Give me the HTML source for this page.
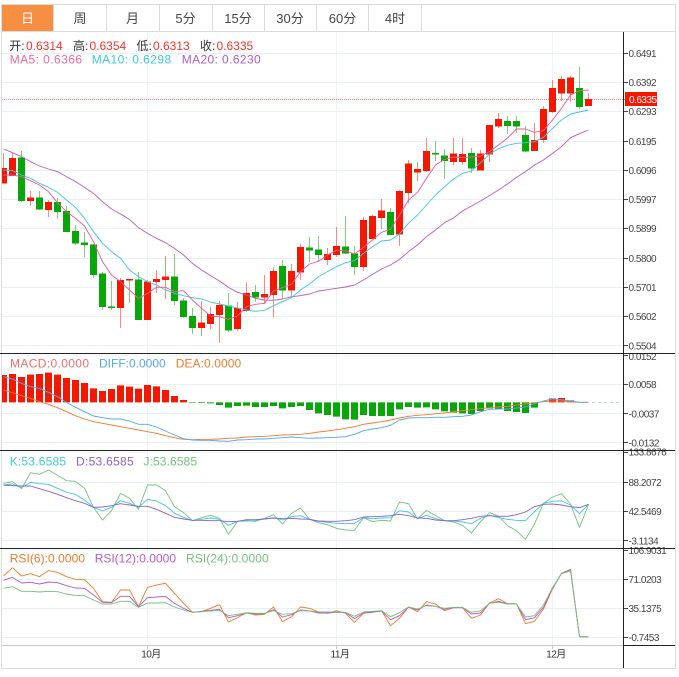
<!DOCTYPE html>
<html><head><meta charset="utf-8"><style>
html,body{margin:0;padding:0;background:#fff;width:679px;height:677px;overflow:hidden}
svg{display:block;font-family:"Liberation Sans","Noto Sans CJK SC",sans-serif}
.n{vector-effect:non-scaling-stroke;fill:none}
.ax text{font-size:10px;letter-spacing:-.5px;fill:#444}
.tb text{font-size:13px;fill:#444;text-anchor:middle}
</style></head><body>
<svg width="679" height="677" viewBox="0 0 679 677" xmlns="http://www.w3.org/2000/svg">
<defs><clipPath id="c"><rect x="2" y="32" width="621" height="613"/></clipPath></defs>
<!-- grid -->
<path stroke="#e8f0f5" stroke-width="1" fill="none" d="M2 53.5H623M2 82.5H623M2 111.5H623M2 141.5H623M2 170.5H623M2 199.5H623M2 228.5H623M2 258.5H623M2 287.5H623M2 316.5H623M2 345.5H623M2 384.5H623M2 413.5H623M2 442.5H623M2 482.5H623M2 511.5H623M2 540.5H623M2 579.5H623M2 608.5H623M2 637.5H623"/>
<path stroke="#f2f6f9" stroke-width="1" fill="none" d="M2 355.5H623M2 452.5H623M2 550.5H623"/>
<path stroke="#edf3f7" stroke-width="1" fill="none" d="M147.5 32V645M336.5 32V645M552.5 32V645"/>
<path stroke="#f77" stroke-width="1" stroke-dasharray="1 1" fill="none" d="M2 99.5H625"/>
<path stroke="#b5d8ea" stroke-width="1" stroke-dasharray="3 3" fill="none" d="M592 402.5H622"/>
<g clip-path="url(#c)">
<!-- candles -->
<g transform="translate(3.5 0) scale(9 1)">
<path class="n" stroke="#f98a80" stroke-width="1" d="M0 153V168M1 153V158M3 191V206M5 200V217M13 278V328M14 279V303M16 280V282M17 270V293M18 256V299M22 301V336M23 307V329M24 301V343M26 302V331M27 282V312M29 275V304M30 267V317M32 264V297M33 244V280M36 248V265M37 227V257M40 217V271M41 215V217M42 199V229M44 190V246M45 160V203M46 162V181M47 138V172M50 138V165M51 138V165M53 150V170M54 125V162M55 113V128M59 123V151M60 106V143M61 80V113M62 76V101M63 76V102M65 93V106"/>
<path class="n" stroke="#7fcf7f" stroke-width="1" d="M2 151V202M4 191V210M6 198V219M7 206V232M8 225V245M9 232V257M10 244V278M11 272V310M12 281V310M15 272V320M19 254V305M20 298V318M21 308V334M25 293V332M28 285V302M31 260V299M34 237V262M35 236V262M38 216V254M39 246V275M43 208V235M48 141V161M49 149V179M52 148V173M56 116V134M57 116V133M58 126V152M64 67V109"/>
<path class="n" stroke="#f51800" stroke-width="7" d="M0 168V183.5M1 158V176M3 197.5V201M5 202V210M13 280V308M14 279V280.5M16 281.5V320M17 279V282M18 276.5V280M22 322.5V328M23 314V324M24 305V315M26 308V329M27 293V311M29 294V297.5M30 271V295M32 271V290.5M33 247V272.5M36 254V260M37 246V255M40 220V267M41 216V239M42 210.5V218M44 191V234.5M45 163.5V193M46 169V172.5M47 151V171M50 153.5V162M51 154V162M53 153.5V170.5M54 125V154.5M55 119V126.5M59 140V151M60 109V140M61 88V112M62 79V93.5M63 77.5V93.5M65 99V106"/>
<path class="n" stroke="#09a609" stroke-width="7" d="M2 157.5V201M4 197.5V209.5M6 202V212M7 211V232M8 231V243.5M9 242.5V245M10 244.5V275M11 273.5V307M12 306.5V308M15 279.5V320M19 276.5V301M20 300.5V317M21 316V328M25 305.5V330.5M28 292V297.5M31 266V290.5M34 247.5V250.5M35 249.5V255M38 246.5V253.5M39 253.5V267M43 212V235M48 153V154.5M49 155.5V161M52 153V168.5M56 121V126M57 121V126.5M58 135V151.5M64 88V107"/>
</g>
<!-- MA -->
<g transform="translate(3.5 130) scale(9 .33333)" stroke-width=".9" stroke-linejoin="round">
<polyline class="n" stroke="#b35cc8" points="0,57 1,68 2,80 3,95 4,108 5,117 6,125 7,140 8,155 9,172 10,190 11,215 12,237 13,252 14,268 15,293 16,310 17,325 18,338 19,355 20,375 21,400 22,420 23,437 24,453 25,472 26,487 27,495 28,505 29,510 30,511 31,507 32,500 33,497 34,492 35,483 36,479 37,475 38,471 39,465 40,450 41,433 42,417 43,405 44,388 45,365 46,345 47,320 48,300 49,278 50,264 51,243 52,228 53,213 54,197 55,180 56,162 57,142 58,125 59,105 60,90 61,70 62,50 63,23 64,11 65,0"/>
<polyline class="n" stroke="#3cc8de" points="0,120 1,122 2,135 3,145 4,160 5,172 6,187 7,210 8,232 9,265 10,305 11,340 12,365 13,385 14,420 15,440 16,455 17,465 18,480 19,490 20,497 21,503 22,507 23,516 24,522 25,528 26,534 27,540 28,544 29,541 30,527 31,515 32,503 33,480 34,462 35,440 36,425 37,410 38,398 39,392 40,370 41,350 42,333 43,330 44,312 45,280 46,255 47,225 48,195 49,170 50,147 51,130 52,123 53,98 54,73 55,56 56,46 57,40 58,38 59,35 60,22 61,-5 62,-30 63,-48 64,-54 65,-60"/>
<polyline class="n" stroke="#ee5a90" points="0,135 1,135 2,140 3,152 4,165 5,185 6,218 7,245 8,265 9,288 10,335 11,395 12,435 13,455 14,480 15,505 16,490 17,472 18,472 19,485 20,482 21,510 22,535 23,558 24,560 25,568 26,558 27,530 28,523 29,520 30,483 31,473 32,463 33,425 34,402 35,394 36,375 37,361 38,362 39,372 40,352 41,330 42,307 43,298 44,255 45,210 46,187 47,145 48,105 49,88 50,81 51,83 52,81 53,78 54,65 55,45 56,24 57,-3 58,-3 59,7 60,2 61,-30 62,-65 63,-105 64,-118 65,-120"/>
</g>
<!-- MACD -->
<g transform="translate(3.5 345) scale(9 .33333)" stroke-linejoin="round">
<path class="n" stroke="#f51800" stroke-width="7" d="M0 172V90M1 172V87M2 172V96M3 172V89M4 172V87M5 172V83M6 172V89M7 172V99M8 172V105M9 172V114M10 172V130M11 172V138M12 172V132M13 172V121M14 172V125M15 172V131M16 172V120M17 172V124M18 172V135M19 172V153M20 172V165M61 172V160M62 172V159M63 172V166"/>
<path class="n" stroke="#09a609" stroke-width="7" d="M21 172V173.5M22 172V174M23 172V175M24 172V180M25 172V188M26 172V183M27 172V182M28 172V186M29 172V186M30 172V183M31 172V190M32 172V186M33 172V183M34 172V195M35 172V205M36 172V210M37 172V215M38 172V223M39 172V224M40 172V210M41 172V213M42 172V213M43 172V213M44 172V193M45 172V186M46 172V188M47 172V187M48 172V193M49 172V199M50 172V203M51 172V205M52 172V207M53 172V198M54 172V190M55 172V192M56 172V198M57 172V201M58 172V204M59 172V188"/>
<polyline class="n" stroke="#f57a2c" stroke-width=".9" points="0,135 1,143 2,152 3,160 4,170 5,178 6,188 7,200 8,212 9,222 10,230 11,235 12,240 13,245 14,250 15,255 16,260 17,265 18,272 19,278 20,283 21,284 22,283 23,283 24,282 25,280 26,279 27,276 28,275 29,274 30,272 31,270 32,269 33,268 34,265 35,261 36,258 37,254 38,250 39,245 40,238 41,234 42,230 43,225 44,219 45,214 46,211 47,209 48,206 49,204 50,200 51,197 52,194 53,191 54,188 55,186 56,184 57,180 58,177 59,173 60,170 61,168 62,168 63,171 64,172 65,172"/>
<polyline class="n" stroke="#4fa8f0" stroke-width=".9" points="0,95 1,102 2,115 3,125 4,130 5,142 6,155 7,172 8,187 9,200 10,213 11,218 12,222 13,222 14,228 15,238 16,238 17,246 18,258 19,270 20,281 21,285 22,286 23,286 24,288 25,289 26,285 27,284 28,282 29,282 30,280 31,278 32,276 33,278 34,280 35,279 36,278 37,277 38,275 39,268 40,257 41,252 42,248 43,241 44,225 45,219 46,218 47,218 48,217 49,217 50,215 51,214 52,210 53,200 54,193 55,192 56,192 57,189 58,186 59,176 60,168 61,162 62,164 63,168 64,172 65,172"/>
</g>
<!-- KDJ -->
<g transform="translate(3.5 450) scale(9 .33333)" stroke-linejoin="round" stroke-width=".9">
<polyline class="n" stroke="#74c27a" points="0,100 1,95 2,116 3,68 4,73 5,60 6,76 7,92 8,94 9,115 10,172 11,210 12,182 13,130 14,145 15,178 16,105 17,105 18,122 19,170 20,188 21,212 22,203 23,196 24,205 25,253 26,214 27,211 28,214 29,205 30,194 31,222 32,190 33,174 34,208 35,218 36,224 37,235 38,240 39,241 40,203 41,215 42,211 43,213 44,156 45,161 46,207 47,181 48,197 49,212 50,216 51,226 52,249 53,215 54,188 55,198 56,227 57,242 58,268 59,222 60,160 61,141 62,131 63,162 64,232 65,163"/>
<polyline class="n" stroke="#3cc8de" points="0,105 1,102 2,113 3,97 4,101 5,103 6,115 7,127 8,133 9,150 10,172 11,183 12,172 13,152 14,160 15,172 16,148 17,153 18,167 19,190 20,202 21,212 22,208 23,204 24,208 25,226 26,214 27,213 28,212 29,207 30,203 31,210 32,200 33,197 34,208 35,214 36,217 37,220 38,221 39,220 40,203 41,206 42,204 43,203 44,182 45,186 46,206 47,196 48,206 49,212 50,213 51,216 52,221 53,205 54,196 55,203 56,208 57,211 58,212 59,185 60,160 61,154 62,153 63,165 64,191 65,163"/>
<polyline class="n" stroke="#8e5fc9" points="0,106 1,107 2,108 3,108 4,116 5,124 6,133 7,143 8,152 9,160 10,172 11,171 12,167 13,161 14,165 15,169 16,169 17,178 18,190 19,202 20,207 21,211 22,211 23,212 24,212 25,215 26,214 27,209 28,209 29,207 30,204 31,206 32,205 33,207 34,208 35,213 36,214 37,214 38,212 39,209 40,201 41,200 42,199 43,197 44,193 45,197 46,204 47,205 48,210 49,212 50,212 51,209 52,205 53,199 54,197 55,199 56,199 57,194 58,186 59,170 60,163 61,162 62,165 63,170 64,173 65,163"/>
</g>
<!-- RSI -->
<g transform="translate(3.5 545) scale(9 .33333)" stroke-linejoin="round" stroke-width=".9">
<polyline class="n" stroke="#f57a2c" points="0,93 1,68 2,93 3,86 4,95 5,77 6,82 7,95 8,103 9,104 10,130 11,170 12,172 13,135 14,135 15,185 16,127 17,120 18,115 19,145 20,175 21,202 22,200 23,190 24,179 25,231 26,218 27,203 28,210 29,208 30,186 31,230 32,215 33,186 34,190 35,200 36,205 37,197 38,205 39,232 40,205 41,202 42,197 43,242 44,220 45,186 46,200 47,170 48,177 49,197 50,188 51,188 52,220 53,210 54,174 55,161 56,176 57,176 58,236 59,229 60,192 61,132 62,85 63,73 64,275 65,275"/>
<polyline class="n" stroke="#b35cc8" points="0,106 1,97 2,114 3,112 4,117 5,111 6,113 7,122 8,129 9,130 10,150 11,172 12,173 13,154 14,154 15,185 16,158 17,156 18,154 19,175 20,190 21,202 22,199 23,196 24,193 25,218 26,212 27,204 28,207 29,206 30,194 31,216 32,209 33,195 34,198 35,204 36,204 37,202 38,203 39,221 40,204 41,201 42,198 43,224 44,212 45,187 46,195 47,180 48,184 49,193 50,188 51,188 52,207 53,204 54,175 55,169 56,176 57,177 58,224 59,218 60,187 61,130 62,85 63,74 64,275 65,275"/>
<polyline class="n" stroke="#74c27a" points="0,130 1,125 2,139 3,139 4,141 5,139 6,140 7,147 8,151 9,152 10,165 11,177 12,177 13,169 14,169 15,187 16,174 17,174 18,173 19,186 20,195 21,202 22,200 23,198 24,196 25,212 26,208 27,203 28,205 29,205 30,197 31,208 32,206 33,197 34,198 35,201 36,201 37,201 38,202 39,214 40,201 41,199 42,197 43,215 44,203 45,186 46,192 47,182 48,184 49,190 50,187 51,187 52,202 53,197 54,175 55,172 56,177 57,177 58,216 59,212 60,180 61,128 62,86 63,78 64,275 65,275"/>
</g>
</g>
<!-- tabs -->
<rect x="2" y="5" width="51" height="26" fill="#f68f42"/>
<path stroke="#dcdcdc" stroke-width="1" fill="none" d="M1.5 4.5H675.5V668.5H1.5ZM1.5 31.5H675.5M53.5 5V31M106.5 5V31M159.5 5V31M212.5 5V31M264.5 5V31M316.5 5V31M368.5 5V31M421.5 5V31"/>
<g class="tb">
<text x="27.5" y="23" style="fill:#fff">日</text>
<text x="80" y="23">周</text>
<text x="132.5" y="23">月</text>
<text x="185.5" y="23">5分</text>
<text x="238" y="23">15分</text>
<text x="290" y="23">30分</text>
<text x="342.5" y="23">60分</text>
<text x="395" y="23">4时</text>
</g>
<!-- header texts -->
<g font-size="12">
<text x="9.3" y="50" fill="#333">开:</text><text x="26" y="50" fill="#f4352a">0.6314</text>
<text x="73" y="50" fill="#333">高:</text><text x="89.5" y="50" fill="#f4352a">0.6354</text>
<text x="136.5" y="50" fill="#333">低:</text><text x="153" y="50" fill="#f4352a">0.6313</text>
<text x="200" y="50" fill="#333">收:</text><text x="216.5" y="50" fill="#f4352a">0.6335</text>
<text x="9.7" y="63.5" fill="#ee6a9a" textLength="72.3">MA5: 0.6366</text>
<text x="91.7" y="63.5" fill="#3cc8de" textLength="79.5">MA10: 0.6298</text>
<text x="181.7" y="63.5" fill="#b35cc8" textLength="79">MA20: 0.6230</text>
<text x="10" y="367.7" fill="#f26d6d" textLength="79">MACD:0.0000</text>
<text x="99" y="367.7" fill="#55a8ee" textLength="66.7">DIFF:0.0000</text>
<text x="175.7" y="367.7" fill="#f57a2c" textLength="65.5">DEA:0.0000</text>
<text x="9.7" y="465.3" fill="#3cc8de" textLength="56.3">K:53.6585</text>
<text x="76" y="465.3" fill="#8e5fc9" textLength="57.7">D:53.6585</text>
<text x="143.5" y="465.3" fill="#74c27a" textLength="53.5">J:53.6585</text>
<text x="9.7" y="562.3" fill="#f57a2c" textLength="75.3">RSI(6):0.0000</text>
<text x="94.7" y="562.3" fill="#b35cc8" textLength="81.3">RSI(12):0.0000</text>
<text x="186" y="562.3" fill="#74c27a" textLength="82.7">RSI(24):0.0000</text>
</g>
<!-- axis labels -->
<g class="ax">
<text x="628.5" y="57">0.6491</text><text x="628.5" y="86">0.6392</text><text x="628.5" y="115">0.6293</text><text x="628.5" y="145">0.6195</text><text x="628.5" y="174">0.6096</text><text x="628.5" y="203">0.5997</text><text x="628.5" y="232">0.5899</text><text x="628.5" y="262">0.5800</text><text x="628.5" y="291">0.5701</text><text x="628.5" y="320">0.5602</text><text x="628.5" y="349.5">0.5504</text>
<text x="628.5" y="360">0.0152</text><text x="628.5" y="388">0.0058</text><text x="628.5" y="417.5">-0.0037</text><text x="628.5" y="446.5">-0.0132</text>
<text x="628.5" y="455.5">133.8676</text><text x="628.5" y="486">88.2072</text><text x="628.5" y="515">42.5469</text><text x="628.5" y="544.5">-3.1134</text>
<text x="628.5" y="554">106.9031</text><text x="628.5" y="583">71.0203</text><text x="628.5" y="612">35.1375</text><text x="628.5" y="641">-0.7453</text>
</g>
<rect x="625" y="92" width="32" height="14" fill="#f51800"/>
<text x="629" y="103" font-size="10" letter-spacing="-.5" fill="#fff">0.6335</text>
<!-- axes -->
<path stroke="#c8c8c8" stroke-width="1" fill="none" d="M2 645.5H623M147.5 645V649M336.5 645V649M552.5 645V649"/>
<path stroke="#222" stroke-width="1" fill="none" d="M623.5 32V668M623 645.5H675M0 353.5H675M0 450.5H675M0 548.5H675"/>
<path stroke="#444" stroke-width="1" fill="none" d="M624 53.5H628M624 82.5H628M624 111.5H628M624 141.5H628M624 170.5H628M624 199.5H628M624 228.5H628M624 258.5H628M624 287.5H628M624 316.5H628M624 345.5H628M624 355.5H628M624 384.5H628M624 413.5H628M624 442.5H628M624 452.5H628M624 482.5H628M624 511.5H628M624 540.5H628M624 550.5H628M624 579.5H628M624 608.5H628M624 637.5H628"/>
<g font-size="10" letter-spacing="-.5" fill="#333" text-anchor="middle">
<text x="151" y="657.5">10月</text><text x="340" y="657.5">11月</text><text x="556" y="657.5">12月</text>
</g>
</svg>
</body></html>
